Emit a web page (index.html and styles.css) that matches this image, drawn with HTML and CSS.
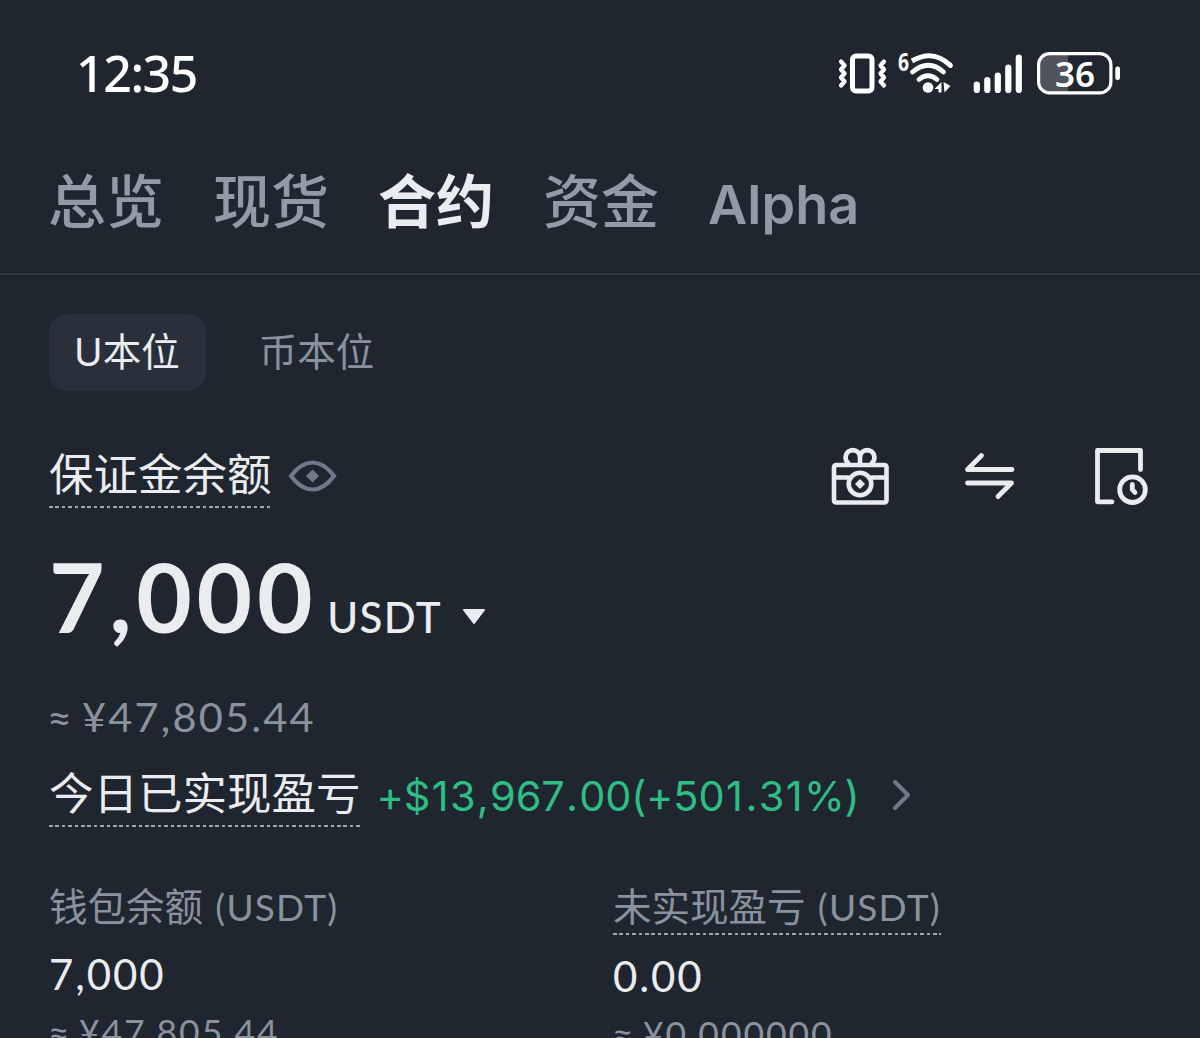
FILE: index.html
```html
<!DOCTYPE html>
<html lang="zh-CN">
<head>
<meta charset="utf-8">
<title>合约</title>
<link rel="stylesheet" href="styles.css">
</head>
<body>
<header class="status">
  <span class="time">12:35</span>
  <svg class="vibrate" width="50" height="48" viewBox="838 50 50 48" fill="none" stroke="#fff" stroke-linecap="round" stroke-linejoin="round">
    <rect x="852.5" y="56" width="19.5" height="35" rx="3.5" stroke-width="5"/>
    <path d="M841 62l3.500 4-3.500 4 3.500 4-3.500 4 3.500 4-3.500 4M884 62l-3.500 4 3.500 4-3.500 4 3.500 4-3.500 4 3.500 4" transform="translate(0 -.5)" stroke-width="4.200"/>
  </svg>
  <svg class="wifi" width="56" height="48" viewBox="898 50 56 48" fill="none" stroke="#fff" stroke-linecap="round">
    <text class="wifi-gen" x="898" y="71" textLength="11" lengthAdjust="spacingAndGlyphs">6</text>
    <path d="M912 61Q933 48.500 950.500 65.500" stroke-width="5" stroke-linecap="butt"/>
    <path d="M949.500 64.500L950.500 65.500M912.500 72Q928.500 58.500 943.500 72M919 79.500Q928 72 937 79.500" stroke-width="4.800"/>
    <circle cx="928" cy="87.500" r="5.300" fill="#fff" stroke="none"/>
    <path d="M934.500 89L941.500 82V92.500H938.500V89ZM943.500 82L950.500 86 944.500 92.500Z" fill="#fff" stroke="none"/>
  </svg>
  <svg class="signal" width="50" height="48" viewBox="973 50 50 48" fill="none" stroke="#fff" stroke-width="6.200" stroke-linecap="round">
    <path d="M976.800 84.500V90M987.300 80V90M997.800 75.500V90M1008.300 67.500V90M1018.800 57.500V90"/>
  </svg>
  <svg class="battery" width="84" height="48" viewBox="1037 50 84 48">
    <path d="M1068 55H1050Q1040 55 1040 65V82Q1040 92 1050 92H1068Z" fill="#50555d"/>
    <rect x="1038.600" y="53.600" width="72.300" height="39.300" rx="11" fill="none" stroke="#fff" stroke-width="3.200"/>
    <rect x="1115.300" y="66.500" width="4.700" height="13.500" rx="2.300" fill="#fff"/>
    <text class="battery-level" x="1075" y="87" text-anchor="middle">36</text>
  </svg>
</header>

<nav class="tabs">
  <span>总览</span>
  <span>现货</span>
  <span class="active">合约</span>
  <span>资金</span>
  <span class="latin">Alpha</span>
</nav>

<main>
  <div class="pills">
    <span class="pill selected">U本位</span>
    <span class="pill">币本位</span>
  </div>

  <section class="balance">
    <span class="label dashed">保证金余额</span>
    <svg class="eye" width="50" height="65" viewBox="288 443 50 65">
      <path d="M291 476Q301 462.500 312.500 462.500T334 476Q324 489.500 312.500 489.500T291 476Z" fill="none" stroke="#6f7a8b" stroke-width="4.200" stroke-linejoin="miter"/>
      <path d="M312.500 469.500L319 476 312.500 482.500 306 476Z" fill="#6f7a8b"/>
    </svg>
    <div class="actions">
      <svg width="60" height="65" viewBox="830 443 60 65" fill="none" stroke="#eaecef" stroke-width="4.600">
        <rect x="834" y="465" width="52.500" height="37.500" rx="2"/>
        <path d="M834 477.500H849M871 477.500H886.500M860 464V457.500A7.200 7.200 0 1 0 847.500 462.200L848.500 464M860 457.500A7.200 7.200 0 1 1 872.500 462.200L871.500 464"/>
        <circle cx="860" cy="484" r="11.300"/>
        <path d="M860 479L865 484 860 489 855 484Z" fill="#eaecef" stroke="none"/>
      </svg>
      <svg width="52" height="65" viewBox="964 443 52 65" fill="none" stroke="#eaecef" stroke-width="4.800" stroke-linecap="round" stroke-linejoin="round">
        <path d="M981.500 455.500L967.500 469.500H1012M967.500 483H1011.500L998 496.500"/>
      </svg>
      <svg width="56" height="65" viewBox="1094 443 56 65" fill="none" stroke="#eaecef" stroke-width="4.800" stroke-linecap="round" stroke-linejoin="round">
        <path d="M1140.500 469.500V450.500H1097.500V501.800H1112"/>
        <circle cx="1132.500" cy="489.700" r="12.800"/>
        <path d="M1132.300 484.500V489.500L1135 492.500"/>
      </svg>
    </div>
  </section>

  <section class="amount">
    <span class="figure">7,000</span>
    <span class="unit">USDT</span>
    <svg class="caret" width="24" height="16" viewBox="0 0 24 16"><path d="M2 1H22L12 14Z" fill="#eaecef" stroke="#eaecef" stroke-width="2" stroke-linejoin="round"/></svg>
  </section>

  <div class="fiat"><span class="approx">≈</span><span>¥47,805.44</span></div>

  <section class="pnl">
    <span class="label dashed">今日已实现盈亏</span>
    <span class="gain">+$<b>1</b>3<b>,</b>967<b>.</b>00(+50<b>1</b><b>.</b>3<b>1</b>%)</span>
    <svg class="chevron" width="20" height="34" viewBox="0 0 20 34"><path d="M3 4L16 17 3 30" fill="none" stroke="#717a89" stroke-width="4" stroke-linecap="round" stroke-linejoin="round"/></svg>
  </section>

  <section class="stats">
    <div class="stat">
      <div class="name">钱包余额 <span>(USDT)</span></div>
      <div class="value">7,000</div>
      <div class="sub"><span class="approx">≈</span><span>¥47,805.44</span></div>
    </div>
    <div class="stat lowered">
      <div class="name dashed">未实现盈亏 <span>(USDT)</span></div>
      <div class="value">0.00</div>
      <div class="sub"><span class="approx">≈</span><span>¥0.000000</span></div>
    </div>
  </section>
</main>
</body>
</html>
```

FILE: styles.css
```css
* { box-sizing: border-box; }

body {
  margin: 0;
  width: 1200px;
  height: 1038px;
  overflow: hidden;
  background: #20262f;
  color: #eaecef;
  font-family: Inter, "Noto Sans CJK SC", sans-serif;
  white-space: nowrap;
}

svg { display: block; flex: none; overflow: visible; }

.status {
  display: flex;
  height: 162px;
  padding: 50px 79px 0 76px;
  color: #fff;
}
.time {
  margin: -7px auto 0 0;
  font: 500 50px/60px "Noto Sans", sans-serif;
  letter-spacing: -1.4px;
}
.wifi { margin-left: 10px; }
.wifi-gen { font: 700 25px "Open Sans", sans-serif; fill: #fff; stroke: none; }
.signal { margin-left: 19px; }
.battery { margin-left: 14px; }
.battery-level { font: 600 35px "Noto Sans", sans-serif; fill: #fff; }

.tabs {
  display: flex;
  gap: 49px;
  height: 113px;
  padding-left: 48px;
  border-bottom: 2px solid #2f3640;
  color: #929aa5;
  font-size: 58px;
  line-height: 81px;
  font-weight: 500;
}
.tabs .active { color: #eaecef; font-weight: 700; }
.tabs .latin { font-size: 54px; line-height: 85px; font-weight: 600; }

main { padding: 39px 50px 0 49px; }

.pills { display: flex; gap: 28px; }
.pill {
  height: 77px;
  padding: 0 26px 0 25px;
  border-radius: 18px;
  color: #8a929e;
  font-size: 38.5px;
  line-height: 76px;
}
.pill.selected { background: #29303c; color: #eaecef; }

.dashed {
  background: repeating-linear-gradient(90deg, #a3a9b3 0 3.6px, transparent 3.6px 6.4px) left bottom / 100% 2px no-repeat;
}

.label { height: 65px; font-size: 44.5px; line-height: 64px; }

.balance { display: flex; margin-top: 52px; }
.eye { margin-left: 16px; }
.actions { display: flex; margin-left: auto; }
.actions svg + svg { margin-left: 74px; }
.actions svg + svg + svg { margin-left: 78px; }

.figure, .unit, .fiat, .value, .sub, .name span { font-family: Lato, sans-serif; }

.amount { display: flex; height: 100px; margin-top: 40px; }
.figure { font-size: 96px; line-height: 95px; font-weight: 700; letter-spacing: 4.6px; }
.unit { margin-left: 10px; font-size: 42px; line-height: 138px; font-weight: 500; letter-spacing: 1.4px; }
.caret { margin: 61px 0 0 20px; }

.fiat {
  display: flex;
  margin-top: 43px;
  height: 51px;
  color: #8a929e;
  font-size: 41.5px;
  line-height: 51px;
  letter-spacing: 2.2px;
}
.fiat .approx { width: 34px; margin-left: -2px; margin-right: 1px; font-size: 43px; }

.pnl { display: flex; margin-top: 20px; }
.gain {
  margin-left: 16px;
  padding-top: 3px;
  color: #2ebd85;
  font-size: 41.5px;
  line-height: 62px;
  letter-spacing: -0.2px;
}
.gain b { padding: 0 1.5px; font-weight: 400; }
.chevron { margin: 16px 0 0 33px; }

.stats {
  display: grid;
  grid-template-columns: 564px auto;
  justify-content: start;
  margin-top: 54px;
}
.stat { width: max-content; }
.name { height: 54px; color: #8a929e; font-size: 38.5px; line-height: 51px; }
.name span { margin-left: 1.5px; font-size: 37px; letter-spacing: 1.2px; }
.value { width: max-content; height: 50px; margin-top: 14px; font-size: 42px; line-height: 50px; letter-spacing: 1.9px; }
.sub { display: flex; margin-top: 14px; color: #8a929e; font-size: 35.6px; line-height: 38px; letter-spacing: 1.9px; }
.sub .approx { width: 31px; margin-left: -1px; font-size: 37px; }
.lowered .value { margin-top: 16px; }
```
